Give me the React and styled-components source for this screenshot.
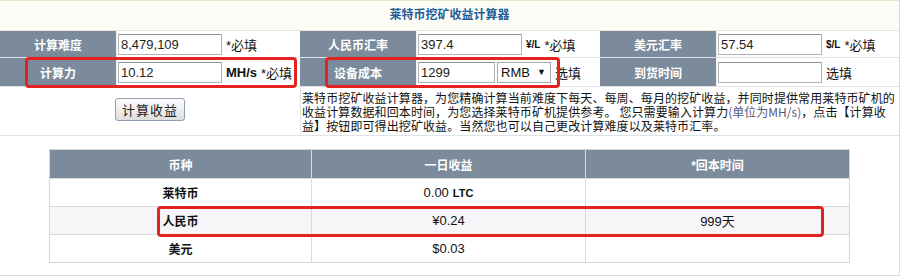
import React from 'react'
import styled, { createGlobalStyle } from 'styled-components'

const GlobalStyle = createGlobalStyle`
  body {
    margin: 0;
    background: #fff;
    font-family: "Liberation Sans", "Noto Sans CJK SC", sans-serif;
    font-size: 13px;
    color: #111;
  }
`

const COLORS = {
  LABEL: '#7b8b9b',
  LINE: '#dde2e8',
  TITLE: '#1e5d98',
  MARK: '#e2231f',
}

const Wrapper = styled.div`
  position: relative;
  width: 900px;
  box-sizing: border-box;
  border: 1px solid #d9dee4;
  border-top-color: #e8e4cc;
  border-left: none;
`

const Title = styled.div`
  height: 29px;
  line-height: 29px;
  background: #fcfcf6;
  border-bottom: 1px solid #e6e5d6;
  text-align: center;
  color: ${COLORS.TITLE};
  font-weight: bold;
  font-size: 12px;
`

const FormRow = styled.div`
  display: grid;
  grid-template-columns: 117px 183px 117px 183px 117px 1fr;
  height: ${(p) => p.h}px;
  border-bottom: 1px solid ${COLORS.LINE};
`

const LabelCell = styled.div`
  display: flex;
  align-items: center;
  justify-content: center;
  background: ${COLORS.LABEL};
  color: #fff;
  font-weight: bold;
  font-size: 12px;
  border-right: 1px solid #eef1f4;
`

const ValueCell = styled.div`
  display: flex;
  align-items: center;
  gap: 4px;
  padding-left: 1px;
  white-space: nowrap;
`

const TextInput = styled.div`
  width: ${(p) => p.w || 104}px;
  height: 21px;
  box-sizing: border-box;
  border: 1px solid #b3b3b3;
  border-top-color: #8f8f8f;
  padding: 0 2px;
  line-height: 19px;
  font-size: 13px;
  color: #222;
  background: #fff;
`

const FakeSelect = styled.div`
  display: flex;
  align-items: center;
  justify-content: space-between;
  width: 54px;
  height: 21px;
  box-sizing: border-box;
  border: 1px solid #a9a9a9;
  padding: 0 4px 0 3px;
  font-size: 13px;
  color: #111;
  margin-left: -2px;
  span {
    font-size: 9px;
  }
`

const Unit = styled.b`
  font-size: ${(p) => p.size || 13}px;
`

const Note = styled.span`
  font-size: 13px;
`

const InfoRow = styled.div`
  display: grid;
  grid-template-columns: 300px 1fr;
  height: 48px;
  border-bottom: 1px solid ${COLORS.LINE};
`

const ButtonCell = styled.div`
  display: flex;
  align-items: center;
  justify-content: center;
`

const CalcButton = styled.button`
  width: 70px;
  height: 23px;
  padding: 0;
  border: 1px solid #8e9fb4;
  border-radius: 3px;
  background: linear-gradient(#fdfdfd, #dedede);
  font-family: "Noto Sans CJK SC", sans-serif;
  font-size: 13px;
  letter-spacing: 1px;
  color: #222;
  margin-top: -4px;
`

const Desc = styled.div`
  border-left: 1px solid ${COLORS.LINE};
  padding: 4px 0 0 1px;
  font-family: "Noto Sans CJK SC", sans-serif;
  font-size: 12px;
  letter-spacing: 0.1px;
  line-height: 14px;
  color: #111;
  white-space: nowrap;
  overflow: hidden;
`

const DescLine = styled.div`
  height: 14px;
`

const Hint = styled.span`
  color: #57577c;
  letter-spacing: 0;
`

const ResultArea = styled.div`
  padding: 13px 49px 12px 49px;
`

const ResultTable = styled.div`
  display: grid;
  grid-template-columns: 262px 274px 1fr;
  border: 1px solid #cfd6de;
`

const Cell = styled.div`
  height: 27px;
  display: flex;
  align-items: center;
  justify-content: center;
  gap: 4px;
  font-size: 13px;
  color: #111;
  border-right: 1px solid #d4dae2;
  border-top: ${(p) => (p.head ? 'none' : '1px solid #d4dae2')};
  background: ${(p) => (p.head ? COLORS.LABEL : p.shade ? '#f6f6f8' : '#fff')};
  font-weight: ${(p) => (p.bold ? 'bold' : 'normal')};
  &:nth-child(3n) {
    border-right: none;
  }
  ${(p) => p.head && 'color: #fff; font-size: 12px; font-weight: bold; height: 28px;'}
  ${(p) => p.bold && 'font-size: 12px;'}
`

const Mark = styled.div`
  position: absolute;
  border: 3px solid ${COLORS.MARK};
  border-radius: 4px;
  pointer-events: none;
`

const rows = [
  { coin: '莱特币', day: <><span>0.00</span><Unit size={11}>LTC</Unit></>, back: '' },
  { coin: '人民币', day: '¥0.24', back: '999天', shade: true },
  { coin: '美元', day: '$0.03', back: '' },
]

export default function App() {
  return (
    <>
      <GlobalStyle />
      <Wrapper>
        <Title>莱特币挖矿收益计算器</Title>
        <FormRow h={26}>
          <LabelCell>计算难度</LabelCell>
          <ValueCell>
            <TextInput>8,479,109</TextInput>
            <Note>*必填</Note>
          </ValueCell>
          <LabelCell>人民币汇率</LabelCell>
          <ValueCell>
            <TextInput>397.4</TextInput>
            <Unit size={10}>¥/L</Unit>
            <Note>*必填</Note>
          </ValueCell>
          <LabelCell>美元汇率</LabelCell>
          <ValueCell>
            <TextInput>57.54</TextInput>
            <Unit size={10}>$/L</Unit>
            <Note>*必填</Note>
          </ValueCell>
        </FormRow>
        <FormRow h={28}>
          <LabelCell>计算力</LabelCell>
          <ValueCell>
            <TextInput>10.12</TextInput>
            <Unit>MH/s</Unit>
            <Note>*必填</Note>
          </ValueCell>
          <LabelCell>设备成本</LabelCell>
          <ValueCell>
            <TextInput w={77}>1299</TextInput>
            <FakeSelect>RMB <span>▼</span></FakeSelect>
            <Note>选填</Note>
          </ValueCell>
          <LabelCell>到货时间</LabelCell>
          <ValueCell>
            <TextInput />
            <Note>选填</Note>
          </ValueCell>
        </FormRow>
        <InfoRow>
          <ButtonCell>
            <CalcButton>计算收益</CalcButton>
          </ButtonCell>
          <Desc>
            <DescLine>莱特币挖矿收益计算器，为您精确计算当前难度下每天、每周、每月的挖矿收益，并同时提供常用莱特币矿机的</DescLine>
            <DescLine>收益计算数据和回本时间，为您选择莱特币矿机提供参考。 您只需要输入计算力<Hint>(单位为MH/s)</Hint>，点击【计算收</DescLine>
            <DescLine>益】按钮即可得出挖矿收益。当然您也可以自己更改计算难度以及莱特币汇率。</DescLine>
          </Desc>
        </InfoRow>
        <ResultArea>
          <ResultTable>
            <Cell head>币种</Cell>
            <Cell head>一日收益</Cell>
            <Cell head>*回本时间</Cell>
            {rows.map((r) => (
              <React.Fragment key={r.coin}>
                <Cell bold shade={r.shade}>{r.coin}</Cell>
                <Cell shade={r.shade}>{r.day}</Cell>
                <Cell shade={r.shade}>{r.back}</Cell>
              </React.Fragment>
            ))}
          </ResultTable>
        </ResultArea>
        <Mark style={{ left: 25, top: 56, width: 266, height: 25 }} />
        <Mark style={{ left: 325, top: 56, width: 229, height: 25 }} />
        <Mark style={{ left: 157, top: 205, width: 661, height: 25 }} />
      </Wrapper>
    </>
  )
}
